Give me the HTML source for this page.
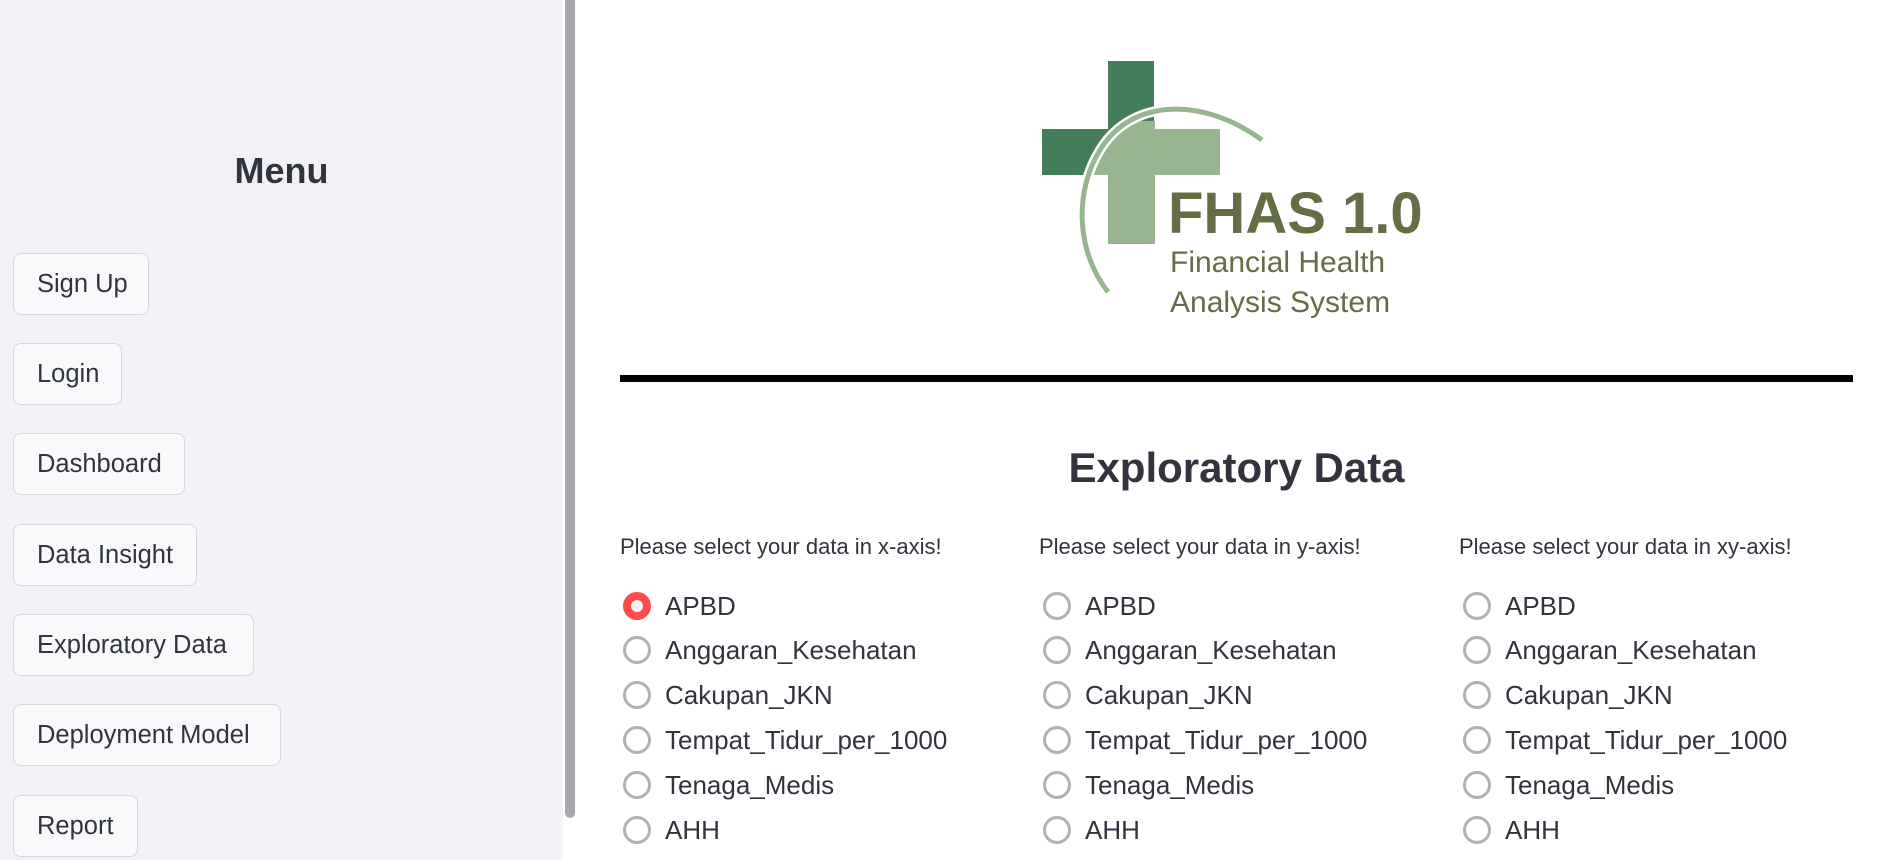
<!DOCTYPE html>
<html><head><meta charset="utf-8"><style>
*{margin:0;padding:0;box-sizing:border-box}
body{width:1897px;height:860px;overflow:hidden;background:#fff;font-family:"Liberation Sans",sans-serif;color:#31333f;position:relative}
.side{position:absolute;left:0;top:0;width:563px;height:860px;background:#f0f2f6}
.sb{position:absolute;left:565px;top:0;width:10px;height:818px;background:#a7a7ae;border-radius:0 0 5px 5px}
.menu{position:absolute;left:0;width:563px;top:150px;text-align:center;font-weight:bold;font-size:36px}
.btn{position:absolute;left:13px;height:62px;border:1px solid #d6d6dc;border-radius:8px;background:#f8f9fb;font-size:25.5px;line-height:60px;padding-left:23px;white-space:nowrap}
.lbl{position:absolute;font-size:22px;top:534px;white-space:nowrap}
.r{position:absolute;font-size:26px;white-space:nowrap;line-height:30px}
.c{position:absolute;width:28px;height:28px;border-radius:50%;border:3px solid #b0b0b6;background:#fff}
.c.on{border:8px solid #ff4b4b;background:#f0f2f6}
</style></head><body>
<div class="side"></div>
<div class="sb"></div>
<div class="menu">Menu</div>
<div class="btn" style="top:253px;width:136px">Sign Up</div>
<div class="btn" style="top:343px;width:109px">Login</div>
<div class="btn" style="top:433px;width:172px">Dashboard</div>
<div class="btn" style="top:524px;width:184px">Data Insight</div>
<div class="btn" style="top:614px;width:241px">Exploratory Data</div>
<div class="btn" style="top:704px;width:268px">Deployment Model</div>
<div class="btn" style="top:795px;width:125px">Report</div>

<svg style="position:absolute;left:0;top:0" width="1897" height="340">
<defs><clipPath id="cp"><path d="M1262,140 C1200,95 1130,100 1100,150 C1075,190 1075,250 1108,292 L1300,300 L1300,80 Z"/></clipPath></defs>
<rect x="1108" y="61" width="46" height="114" fill="#437d5a"/>
<rect x="1042" y="129" width="112" height="46" fill="#437d5a"/>
<g clip-path="url(#cp)" fill="#97b690">
<rect x="1042" y="129" width="178" height="46"/>
<rect x="1108" y="121" width="47" height="123"/>
</g>
<path d="M1262,140 C1200,95 1130,100 1100,150 C1075,190 1075,250 1108,292" fill="none" stroke="#fff" stroke-width="10"/>
<path d="M1262,140 C1200,95 1130,100 1100,150 C1075,190 1075,250 1108,292" fill="none" stroke="#97b690" stroke-width="5"/>
<text x="1168" y="233" font-family="Liberation Sans" font-weight="bold" font-size="58" fill="#636e45">FHAS 1.0</text>
<text x="1170" y="272" font-family="Liberation Sans" font-size="30" fill="#636e45">Financial Health</text>
<text x="1170" y="312" font-family="Liberation Sans" font-size="30" fill="#636e45">Analysis System</text>
</svg>

<div style="position:absolute;left:620px;top:375px;width:1233px;height:7px;background:#000"></div>
<div style="position:absolute;left:620px;width:1233px;top:444px;text-align:center;font-weight:bold;font-size:42px">Exploratory Data</div>

<div class="lbl" style="left:620px">Please select your data in x-axis!</div>
<div class="lbl" style="left:1039px">Please select your data in y-axis!</div>
<div class="lbl" style="left:1459px">Please select your data in xy-axis!</div>

<div class="c on" style="left:623px;top:592px"></div><div class="r" style="left:665px;top:591px">APBD</div>
<div class="c" style="left:623px;top:636px"></div><div class="r" style="left:665px;top:635px">Anggaran_Kesehatan</div>
<div class="c" style="left:623px;top:681px"></div><div class="r" style="left:665px;top:680px">Cakupan_JKN</div>
<div class="c" style="left:623px;top:726px"></div><div class="r" style="left:665px;top:725px">Tempat_Tidur_per_1000</div>
<div class="c" style="left:623px;top:771px"></div><div class="r" style="left:665px;top:770px">Tenaga_Medis</div>
<div class="c" style="left:623px;top:816px"></div><div class="r" style="left:665px;top:815px">AHH</div>

<div class="c" style="left:1043px;top:592px"></div><div class="r" style="left:1085px;top:591px">APBD</div>
<div class="c" style="left:1043px;top:636px"></div><div class="r" style="left:1085px;top:635px">Anggaran_Kesehatan</div>
<div class="c" style="left:1043px;top:681px"></div><div class="r" style="left:1085px;top:680px">Cakupan_JKN</div>
<div class="c" style="left:1043px;top:726px"></div><div class="r" style="left:1085px;top:725px">Tempat_Tidur_per_1000</div>
<div class="c" style="left:1043px;top:771px"></div><div class="r" style="left:1085px;top:770px">Tenaga_Medis</div>
<div class="c" style="left:1043px;top:816px"></div><div class="r" style="left:1085px;top:815px">AHH</div>

<div class="c" style="left:1463px;top:592px"></div><div class="r" style="left:1505px;top:591px">APBD</div>
<div class="c" style="left:1463px;top:636px"></div><div class="r" style="left:1505px;top:635px">Anggaran_Kesehatan</div>
<div class="c" style="left:1463px;top:681px"></div><div class="r" style="left:1505px;top:680px">Cakupan_JKN</div>
<div class="c" style="left:1463px;top:726px"></div><div class="r" style="left:1505px;top:725px">Tempat_Tidur_per_1000</div>
<div class="c" style="left:1463px;top:771px"></div><div class="r" style="left:1505px;top:770px">Tenaga_Medis</div>
<div class="c" style="left:1463px;top:816px"></div><div class="r" style="left:1505px;top:815px">AHH</div>
</body></html>
